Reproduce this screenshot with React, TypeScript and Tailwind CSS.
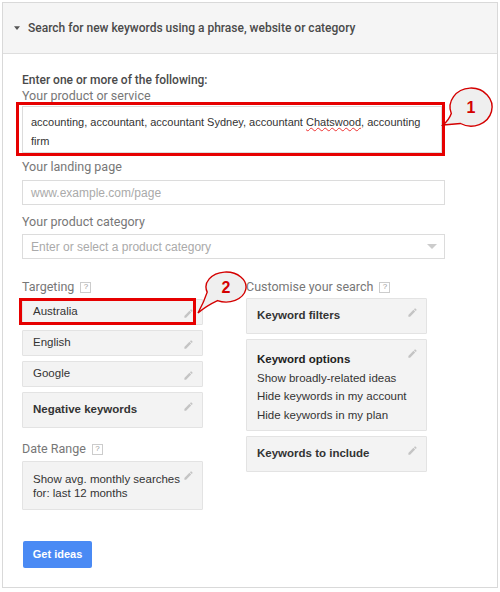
import React from 'react'

const label = "font-['Roboto',sans-serif] text-[12.5px] leading-[16px] text-[#777]"

function Pencil() {
  return (
    <svg viewBox="0 0 24 24" className="absolute right-[8px] top-[8px] h-[11px] w-[11px]" fill="#c4c4c4">
      <path d="M3 17.25V21h3.75L17.81 9.94l-3.75-3.75L3 17.25zM20.71 7.04a1 1 0 000-1.41l-2.34-2.34a1 1 0 00-1.41 0l-1.83 1.83 3.75 3.75 1.83-1.83z" />
    </svg>
  )
}

function Help() {
  return (
    <span className="ml-[6px] inline-flex h-[11px] w-[11px] items-center justify-center border border-[#ccc] bg-white text-[8px] leading-none text-[#999] font-['Liberation_Sans',sans-serif]">
      ?
    </span>
  )
}

function Box({ children, className = '' }: { children: React.ReactNode; className?: string }) {
  return (
    <div className={`relative w-[181px] rounded-[1px] border border-[#e3e3e3] bg-[#f3f3f3] pl-[10px] pr-[18px] font-['Liberation_Sans',sans-serif] text-[11.5px] text-[#333] ${className}`}>
      {children}
      <Pencil />
    </div>
  )
}

export default function App() {
  return (
    <div className="relative h-[592px] w-[500px] overflow-hidden bg-white">
      <div className="mx-[2px] mt-[2px] h-[586px] border border-[#d9d9d9]">
        <div className="flex h-[51px] items-center border-b border-[#dedede] bg-[#f5f5f5] pl-[11px] font-['Roboto',sans-serif] text-[12px] font-medium text-[#4a4a4a]">
          <svg viewBox="0 0 8 5" className="mr-[8px] h-[4px] w-[6px]" fill="#555">
            <path d="M0 0h8L4 5z" />
          </svg>
          Search for new keywords using a phrase, website or category
        </div>

        <div className="pl-[19px] pt-[18px]">
          <div className="font-['Roboto',sans-serif] text-[12px] font-medium leading-[16px] text-[#4a4a4a]">
            Enter one or more of the following:
          </div>
          <div className={label}>Your product or service</div>

          <div className="relative mt-[2px] w-[420px]">
            <div className="h-[47px] border border-[#dcdcdc] bg-white pl-[8px] pr-[4px] pt-[6px] font-['Liberation_Sans',sans-serif] text-[11px] leading-[19px] text-[#333]">
              accounting, accountant, accountant Sydney, accountant{' '}
              <span className="underline decoration-wavy decoration-[#e33] decoration-1">Chatswood</span>, accounting firm
            </div>
            <div className="absolute left-[-6px] top-[-4px] h-[54px] w-[429px] border-[3px] border-[#e60000]" />
          </div>

          <div className={`${label} mt-[6px]`}>Your landing page</div>
          <div className="mt-[5px] flex h-[25px] w-[423px] items-center border border-[#dcdcdc] bg-white px-[8px] font-['Liberation_Sans',sans-serif] text-[12px] text-[#aaa]">
            www.example.com/page
          </div>

          <div className={`${label} mt-[9px]`}>Your product category</div>
          <div className="mt-[4px] flex h-[25px] w-[423px] items-center justify-between border border-[#dcdcdc] bg-white pl-[8px] pr-[6px] font-['Liberation_Sans',sans-serif] text-[12px] text-[#aaa]">
            Enter or select a product category
            <svg viewBox="0 0 12 6" className="h-[5px] w-[12px]" fill="#ccc">
              <path d="M0 0h12L6 6z" />
            </svg>
          </div>

          <div className="mt-[20px] flex gap-[43px]">
            <div className="flex flex-col">
              <div className={`${label} flex items-center`}>
                Targeting
                <Help />
              </div>
              <div className="mt-[4px] flex flex-col gap-[5px]">
                <div className="relative">
                  <Box className="flex h-[26px] items-center">Australia</Box>
                  <div className="absolute left-[-3px] top-[-1px] h-[27px] w-[177px] border-[3px] border-[#e60000]" />
                </div>
                <Box className="flex h-[26px] items-center">English</Box>
                <Box className="flex h-[26px] items-center">Google</Box>
                <Box className="flex h-[36px] items-center font-bold text-[#222]">Negative keywords</Box>
              </div>

              <div className={`${label} mt-[13px] flex items-center`}>
                Date Range
                <Help />
              </div>
              <Box className="mt-[4px] h-[49px] pt-[10px] leading-[14px]">
                Show avg. monthly searches for: last 12 months
              </Box>
            </div>

            <div className="flex flex-col">
              <div className={`${label} flex items-center`}>
                Customise your search
                <Help />
              </div>
              <div className="mt-[3px] flex flex-col gap-[5px]">
                <Box className="flex h-[36px] items-center font-bold text-[#222]">Keyword filters</Box>
                <Box className="h-[92px] pt-[10px] leading-[18.5px]">
                  <div className="font-bold text-[#222]">Keyword options</div>
                  <div className="whitespace-nowrap">Show broadly-related ideas</div>
                  <div className="whitespace-nowrap">Hide keywords in my account</div>
                  <div className="whitespace-nowrap">Hide keywords in my plan</div>
                </Box>
                <Box className="flex h-[36px] items-center font-bold text-[#222]">Keywords to include</Box>
              </div>
            </div>
          </div>

          <button className="ml-[1px] mt-[31px] h-[27px] w-[69px] rounded-[2px] bg-[#4a8af4] font-['Liberation_Sans',sans-serif] text-[11px] font-bold text-white">
            Get ideas
          </button>
        </div>
      </div>

      <svg className="absolute left-[440px] top-[86px]" width="58" height="44" viewBox="0 0 58 44">
        <path d="M11.3 27.5 A21 19 0 1 1 20.5 37.5 Q12 38 3 39 Q9 34 11.3 27.5 Z" fill="#efefef" stroke="#d40000" strokeWidth="1.4" />
        <text x="31" y="27" textAnchor="middle" fontSize="16" fontWeight="bold" fill="#d40000" fontFamily="Liberation Sans, sans-serif">1</text>
      </svg>

      <svg className="absolute left-[194px] top-[270px]" width="54" height="46" viewBox="0 0 54 46">
        <path d="M13.2 22.1 A20 15 0 1 1 23.5 30.6 Q12 36 4 43 Q10 32 13.2 22.1 Z" fill="#efefef" stroke="#d40000" strokeWidth="1.4" />
        <text x="32" y="23" textAnchor="middle" fontSize="16" fontWeight="bold" fill="#d40000" fontFamily="Liberation Sans, sans-serif">2</text>
      </svg>
    </div>
  )
}
